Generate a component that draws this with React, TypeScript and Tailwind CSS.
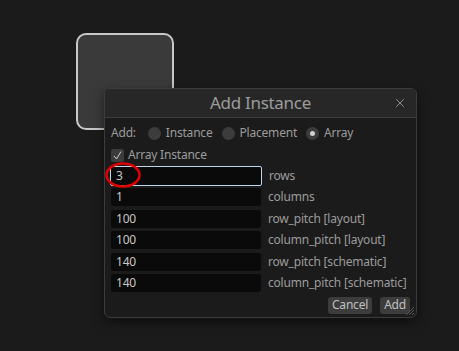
import { X } from "lucide-react";

const FIELDS = [
  { value: "3", label: "rows", focused: true },
  { value: "1", label: "columns" },
  { value: "100", label: "row_pitch [layout]" },
  { value: "100", label: "column_pitch [layout]" },
  { value: "140", label: "row_pitch [schematic]" },
  { value: "140", label: "column_pitch [schematic]" },
];

function Radio({ label, checked }: { label: string; checked?: boolean }) {
  return (
    <div className="flex items-center gap-[5px]">
      <span className="flex h-[13px] w-[13px] items-center justify-center rounded-full bg-[#3c3c3c]">
        {checked && <span className="h-[5px] w-[5px] rounded-full bg-[#d0d0d0]" />}
      </span>
      <span>{label}</span>
    </div>
  );
}

export default function App() {
  return (
    <div
      className="relative h-[351px] w-[459px] overflow-hidden bg-[#1b1b1b] text-[12px] tracking-[-0.2px] whitespace-nowrap text-[#9c9c9c]"
      style={{ fontFamily: '"Noto Sans", "DejaVu Sans", sans-serif' }}
    >
      {/* node on the canvas */}
      <div className="absolute left-[76px] top-[33px] h-[97px] w-[98px] rounded-[10px] border-2 border-[#c8c8c8] bg-[#3a3a3a]" />

      {/* window */}
      <div className="absolute left-[104px] top-[88px] flex h-[230px] w-[313px] flex-col overflow-hidden rounded-[6px] border border-[#3c3c3c] bg-[#1b1b1b] shadow-[0_4px_12px_rgba(0,0,0,0.5)]">
        <div className="relative flex h-[29px] items-center justify-center border-b border-[#3c3c3c] bg-[#272727]">
          <span className="text-[17px] tracking-[-0.3px] text-[#9c9c9c]">Add Instance</span>
          <X className="absolute right-[9px] top-[7px] h-[14px] w-[14px] text-[#b0b0b0]" strokeWidth={1.3} />
        </div>

        <div className="flex flex-1 flex-col px-[6px] pt-[6px]">
          <div className="flex h-[18px] items-center gap-[9px]">
            <span className="mr-[3px]">Add:</span>
            <Radio label="Instance" />
            <Radio label="Placement" />
            <Radio label="Array" checked />
          </div>

          <div className="mt-[4px] flex h-[18px] items-center gap-[4px]">
            <span className="flex h-[13px] w-[13px] items-center justify-center rounded-[2px] bg-[#3c3c3c]">
              <svg width="11" height="11" viewBox="0 0 11 11" fill="none">
                <path d="M2 6 L4.5 9 L9 1.5" stroke="#d0d0d0" strokeWidth="1" />
              </svg>
            </span>
            <span>Array Instance</span>
          </div>

          <div className="mt-[3px] flex flex-col gap-[3.4px]">
            {FIELDS.map((f) => (
              <div key={f.label} className="flex h-[18px] items-center gap-[7px]">
                <div
                  className={
                    f.focused
                      ? "flex h-[20px] w-[152px] -ml-[1px] items-center rounded-[2px] border border-[#c0d4ea] bg-[#0a0a0a] px-[5px] text-[#c8c8c8]"
                      : "flex h-[18px] w-[150px] items-center rounded-[3px] bg-[#0a0a0a] px-[5px] text-[#c8c8c8]"
                  }
                >
                  {f.value}
                </div>
                <span>{f.label}</span>
              </div>
            ))}
          </div>

          <div className="mt-[5px] flex justify-end gap-[8px]">
            <button className="flex h-[17px] items-center rounded-[3px] bg-[#3c3c3c] px-[4px] text-[#c0c0c0]">
              Cancel
            </button>
            <button className="flex h-[17px] items-center rounded-[3px] bg-[#3c3c3c] px-[4px] text-[#c0c0c0]">
              Add
            </button>
          </div>
        </div>

        {/* resize grip */}
        <svg className="absolute bottom-[2px] right-[2px]" width="10" height="10" viewBox="0 0 10 10">
          <path d="M2 10 L10 2 M5 10 L10 5 M8 10 L10 8" stroke="#5a5a5a" strokeWidth="1" />
        </svg>
      </div>

      {/* red annotation */}
      <svg className="absolute left-[104px] top-[161px]" width="40" height="28" viewBox="0 0 40 28">
        <ellipse cx="19" cy="14" rx="16.5" ry="11.5" fill="none" stroke="#e00000" strokeWidth="2.5" />
      </svg>
    </div>
  );
}
